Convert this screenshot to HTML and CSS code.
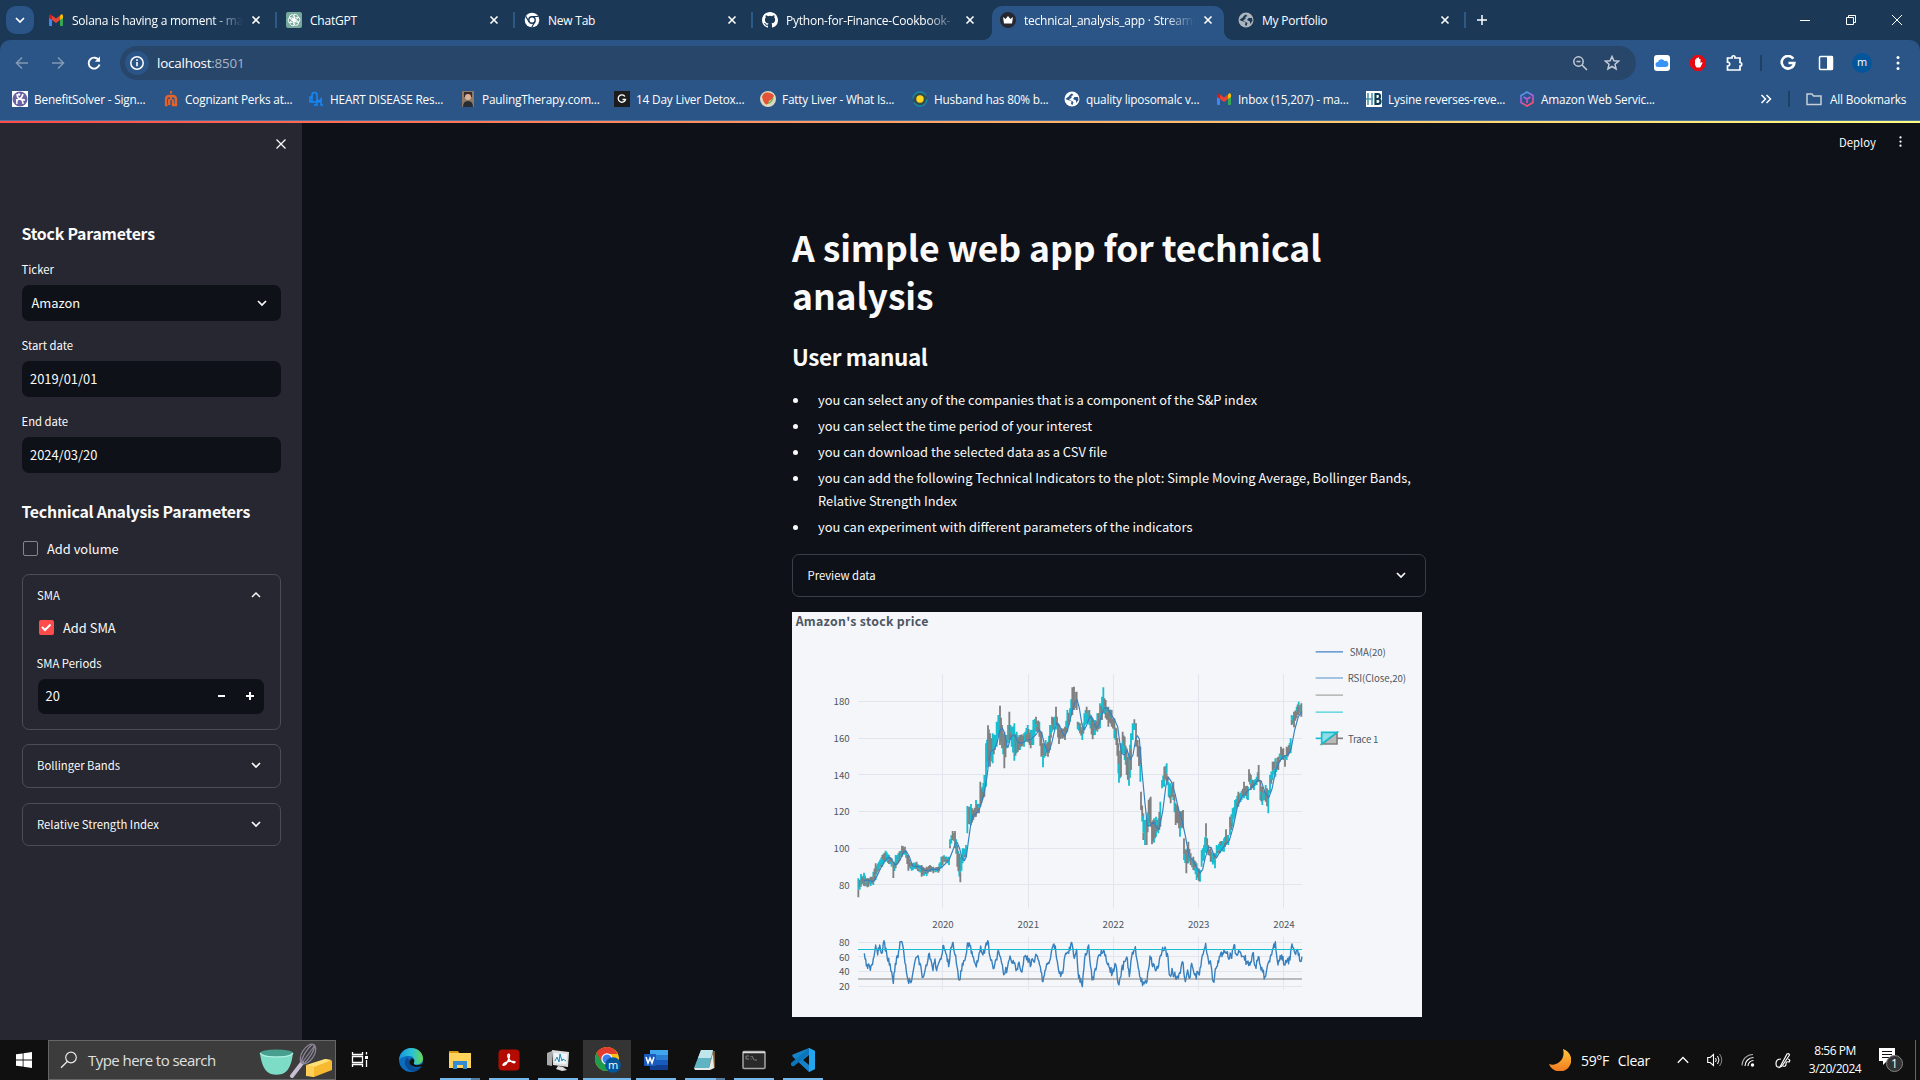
FILE: index.html
```html
<!DOCTYPE html>
<html lang="en">
<head>
<meta charset="utf-8">
<title>technical_analysis_app · Streamlit</title>
<link rel="stylesheet" href="styles.css">
</head>
<body>
<svg class="defs" width="0" height="0">
  <symbol id="x" viewBox="0 0 10 10"><path d="M1.500 1.500l7 7M8.500 1.500l-7 7" stroke="currentColor" stroke-width="1.600" fill="none"/></symbol>
  <symbol id="down" viewBox="0 0 12 12"><path d="M2 4l4 4 4-4" stroke="currentColor" stroke-width="1.700" fill="none"/></symbol>
  <symbol id="up" viewBox="0 0 12 12"><path d="M2 8l4-4 4 4" stroke="currentColor" stroke-width="1.500" fill="none"/></symbol>
  <symbol id="gmail" viewBox="0 0 16 16"><path d="M1 4v9q0 1 1 1h2V6z" fill="#4285f4"/><path d="M15 4v9q0 1-1 1h-2V6z" fill="#34a853"/><path d="M12 3.500l1-1q2-.7 2 1.500v2l-3 2z" fill="#fbbc04"/><path d="M4 3.500 8 6.500l4-3V8l-4 3-4-3z" fill="#ea4335"/><path d="M4 3.500 3 2.500Q1 2 1 4v2l3 2z" fill="#c5221f"/></symbol>
  <symbol id="globe" viewBox="0 0 16 16"><circle cx="8" cy="8" r="7.500" fill="currentColor"/><path d="M8 2.500C5 3.500 5.500 6 3.200 6.500L1.500 8l3 1.200 3 .8-.5 3 1.500 1 1-3L7 9.500 5 8.300 7.500 7V5l2-1z" fill="var(--cut)"/><path d="M14 6h-3.500L9 8l3 1.500V12l2.500-3z" fill="var(--cut)"/></symbol>
  <symbol id="dots" viewBox="0 0 4 16"><circle cx="2" cy="2.500" r="1.500"/><circle cx="2" cy="8" r="1.500"/><circle cx="2" cy="13.500" r="1.500"/></symbol>
</svg>

<div class="screen">
  <header class="browser">
    <div class="tabstrip">
      <div class="tabsearch"><svg width="12" height="12"><use href="#down"/></svg></div>
      <div class="tab first"><svg class="ic"><use href="#gmail"/></svg><span class="fade">Solana is having a moment - ma</span><svg class="close"><use href="#x"/></svg></div>
      <div class="tab"><svg class="ic" viewBox="0 0 16 16"><rect width="16" height="16" rx="2" fill="#75a99c"/><g fill="none" stroke="#fff" stroke-width=".9"><path id="petal" d="M8 2.500c3-1 5 2 3.500 4L7 9V5.500z"/><use href="#petal" transform="rotate(60 8 8)"/><use href="#petal" transform="rotate(120 8 8)"/><use href="#petal" transform="rotate(180 8 8)"/><use href="#petal" transform="rotate(240 8 8)"/><use href="#petal" transform="rotate(300 8 8)"/></g></svg><span>ChatGPT</span><svg class="close"><use href="#x"/></svg></div>
      <div class="tab"><svg class="ic" viewBox="0 0 16 16"><circle cx="8" cy="8" r="7.300" fill="#fff"/><circle cx="8" cy="8" r="3.200" fill="#fff" stroke="#1b3857" stroke-width="1.400"/><path d="M8 4.500h6.500M5 9.700 1.700 4.200M11 9.700l-3.300 5.500" stroke="#1b3857" stroke-width="1.200"/></svg><span>New Tab</span><svg class="close"><use href="#x"/></svg></div>
      <div class="tab last"><svg class="ic" viewBox="0 0 16 16"><path fill="#fff" d="M8 0C3.580 0 0 3.580 0 8c0 3.540 2.290 6.530 5.470 7.590.4.070.55-.17.55-.38v-1.490c-2.010.37-2.530-.49-2.690-.94-.09-.23-.48-.94-.82-1.130-.28-.15-.68-.52-.01-.53.63-.01 1.080.58 1.230.82.72 1.210 1.870.87 2.330.66.07-.52.28-.87.51-1.070-1.780-.2-3.640-.89-3.640-3.950 0-.87.310-1.590.82-2.150-.08-.2-.36-1.020.08-2.120 0 0 .67-.21 2.200.82a7.600 7.600 0 0 1 4 0c1.530-1.040 2.200-.82 2.200-.82.44 1.100.16 1.920.08 2.120.51.560.82 1.270.82 2.150 0 3.070-1.870 3.750-3.650 3.950.29.250.54.730.54 1.480v2.190c0 .21.150.46.550.38A8 8 0 0 0 16 8c0-4.420-3.580-8-8-8"/></svg><span class="fade">Python-for-Finance-Cookbook-</span><svg class="close"><use href="#x"/></svg></div>
      <div class="tab active"><svg class="ic" viewBox="0 0 16 16"><circle cx="8" cy="8" r="8" fill="#262730"/><path d="M3 5l2.500 2L8 4l2.500 3L13 5l-1 6.500H4z" fill="#fff"/></svg><span class="fade">technical_analysis_app · Streaml</span><svg class="close"><use href="#x"/></svg></div>
      <div class="tab end"><svg class="ic gray"><use href="#globe"/></svg><span>My Portfolio</span><svg class="close"><use href="#x"/></svg></div>
      <svg class="plus" width="12" height="12"><path d="M6 1v10M1 6h10" stroke="#fff" stroke-width="1.500"/></svg>
      <div class="wincontrols">
        <svg width="12" height="12"><path d="M1 6.500h10" stroke="#fff"/></svg>
        <svg width="12" height="12"><path d="M1.500 3.500h7v7h-7zM3.500 3.500v-2h7v7h-2" fill="none" stroke="#fff"/></svg>
        <svg width="12" height="12"><path d="M1 1l10 10M11 1 1 11" stroke="#fff"/></svg>
      </div>
    </div>

    <div class="toolbar">
      <div class="nav">
        <svg width="16" height="16"><path d="M14 8H3M8 2.500 2.500 8 8 13.500" fill="none" stroke="#8199b4" stroke-width="1.600"/></svg>
        <svg width="16" height="16"><path d="M2 8h11M8 2.500 13.500 8 8 13.500" fill="none" stroke="#8199b4" stroke-width="1.600"/></svg>
        <svg width="16" height="16"><path d="M13 5.500A5.500 5.500 0 1 0 13.500 9.500" fill="none" stroke="#fff" stroke-width="1.900"/><path d="M14 1.500v5.200H8.800z" fill="#fff"/></svg>
      </div>
      <div class="omnibox">
        <div class="info"><svg width="16" height="16"><circle cx="8" cy="8" r="6.200" fill="none" stroke="#fff" stroke-width="1.500"/><path d="M8 7v4.200M8 4.300v1.600" stroke="#fff" stroke-width="1.600"/></svg></div>
        <span class="url">localhost<span>:8501</span></span>
        <svg width="16" height="16"><g fill="none" stroke="#c3cbd5" stroke-width="1.500"><circle cx="6.500" cy="6.500" r="4.700"/><path d="M10 10l5 5M4.500 6.500h4"/></g></svg>
        <svg class="star" width="16" height="16"><path d="M8 1.500l1.900 4.300 4.700.4L11 9.300l1.100 4.700L8 11.500 3.900 14 5 9.300 1.400 6.200l4.700-.4z" fill="none" stroke="#c3cbd5" stroke-width="1.500"/></svg>
      </div>
      <div class="exts">
        <svg width="16" height="16"><rect width="16" height="16" rx="3" fill="#fff"/><path d="M4 12a2.500 2.500 0 0 1 0-5 3.500 3.500 0 0 1 6.500-1A3 3 0 0 1 12 12z" fill="#3a94f5"/></svg>
        <svg class="block" width="16" height="16"><path d="M5 0h6l5 5v6l-5 5H5l-5-5V5z" fill="#e50914"/><path d="M5 8V4.500h1.300V3h1.500v-.5h1.300V4h1.400v4l1.500-1 .5 1-2.300 4.500H6.500L5 10z" fill="#fff"/></svg>
        <svg class="puzzle" width="18" height="18"><path d="M2.500 4H7c-.5-3 3.500-3 3 0h5v4.500c2.300 0 2.300 3.500 0 3.500v4H2.500v-4c3 .2 3-4 0-3.800z" fill="none" stroke="#fff" stroke-width="1.700"/></svg>
        <i class="vr"></i>
        <svg class="google" width="16" height="16"><path d="M13.300 3.800A6.300 6.300 0 1 0 14.300 8H8.500" fill="none" stroke="#fff" stroke-width="2.600"/></svg>
        <svg class="panel" width="16" height="16"><rect x="1.500" y="1.500" width="13" height="13" rx="1" fill="none" stroke="#fff" stroke-width="1.500"/><path d="M9 1h6v14H9z" fill="#fff"/></svg>
        <b class="avatar">m</b>
        <svg class="white" width="4" height="16"><use href="#dots"/></svg>
      </div>
    </div>

    <div class="bookmarks">
      <a><svg class="ic" viewBox="0 0 16 16"><rect width="16" height="16" fill="#fff"/><circle cx="8" cy="8" r="7.500" fill="#6b62a6"/><path d="M5 3q0 4 3 5t3 5M11 3Q10 7 7 8t-2 5M8 8l-4 1M8 8l5 1" fill="none" stroke="#fff" stroke-width="1.500"/><circle cx="7" cy="3.500" r="1.300" fill="#fff"/></svg>BenefitSolver - Sign...</a>
      <a><svg class="ic" viewBox="0 0 16 16"><path d="M4.500 14H3V8.500Q3 5 6.500 5h3Q13 5 13 8.500V14h-3V8.500M6.200 8v6" fill="none" stroke="#e4632a" stroke-width="2.300"/><path d="M7 0h2v2.500H7zM7 5h2v4H7z" fill="#e4632a"/></svg>Cognizant Perks at...</a>
      <a><svg class="ic" viewBox="0 0 16 16"><path d="M4 11V4q0-2.500 2.500-2.500T9 4v7H2V6h2M6 14h3V8l2 3 2-3v6h2" fill="none" stroke="#1688f7" stroke-width="1.500"/></svg>HEART DISEASE Res...</a>
      <a><svg class="ic" viewBox="0 0 16 16"><rect x="2" width="12" height="16" fill="#8d7966"/><path d="M4 1h8v5H4z" fill="#3a2c27"/><circle cx="8" cy="6" r="3" fill="#dcb49c"/><path d="M3 16q0-6 5-6t5 6z" fill="#272b32"/></svg>PaulingTherapy.com...</a>
      <a><svg class="ic" viewBox="0 0 16 16"><rect width="16" height="16" fill="#1c1c1e"/><path d="M11 5.500A3.700 3.700 0 1 0 11.500 8.500H8.500" fill="none" stroke="#fff" stroke-width="1.300"/></svg>14 Day Liver Detox...</a>
      <a><svg class="ic" viewBox="0 0 16 16"><circle cx="8" cy="8" r="8" fill="#dedbbd"/><path d="M2 6q1-5 6-4.500T14 5q-1 3-5 5-1 4-3 3.500T2 6z" fill="#e45338"/><path d="M8 12q3 0 5-5" stroke="#73ad54" stroke-width="1.500" fill="none"/></svg>Fatty Liver - What Is...</a>
      <a><svg class="ic" viewBox="0 0 16 16"><circle cx="8" cy="8" r="7" fill="#344d48" stroke="#168baa" stroke-width="1.300" stroke-dasharray="18 4"/><circle cx="8" cy="8" r="3.700" fill="#ffd51e"/></svg>Husband has 80% b...</a>
      <a><svg class="ic light"><use href="#globe"/></svg>quality liposomalc v...</a>
      <a><svg class="ic"><use href="#gmail"/></svg>Inbox (15,207) - ma...</a>
      <a><svg class="ic" viewBox="0 0 16 16"><rect width="16" height="16" fill="#fff"/><path d="M2 2v12M6 2v12M0 8h7" stroke="#4b92ad" stroke-width="1.600"/><path d="M9.500 3h2.500q2 0 2 2.300T12 8H9.500h2.500q2.500 0 2.500 2.500T12 13H9.500z" fill="none" stroke="#103c53" stroke-width="2.200"/></svg>Lysine reverses-reve...</a>
      <a><svg class="ic" viewBox="0 0 16 16"><linearGradient id="aws" x2=".4" y2="1"><stop offset="0" stop-color="#18b7e8"/><stop offset=".5" stop-color="#b55bea"/><stop offset="1" stop-color="#ff4f70"/></linearGradient><path d="M8 1l6 3.500v7L8 15l-6-3.500v-7zM4.500 6 8 8l3.500-2M8 8v4" fill="none" stroke="url(#aws)" stroke-width="1.600"/></svg>Amazon Web Servic...</a>
      <svg class="more" width="12" height="10"><path d="M1.500 1l4 4-4 4M6.500 1l4 4-4 4" fill="none" stroke="#fff" stroke-width="1.500"/></svg>
      <i class="vr"></i>
      <a class="all"><svg class="ic" viewBox="0 0 16 16"><path d="M1 3h5l1.500 2H15v8.500H1z" fill="none" stroke="#c7ced8" stroke-width="1.500"/></svg>All Bookmarks</a>
    </div>
  </header>
  <div class="rainbow"></div>

  <div class="app">
    <aside class="sidebar">
      <div class="sidehead"><svg width="12" height="12"><path d="M1.500 1.500l9 9M10.500 1.500l-9 9" stroke="#fafafa" stroke-width="1.300"/></svg></div>
      <h2>Stock Parameters</h2>
      <label>Ticker</label>
      <div class="field select">Amazon<svg width="12" height="12"><use href="#down"/></svg></div>
      <label>Start date</label>
      <div class="field">2019/01/01</div>
      <label>End date</label>
      <div class="field">2024/03/20</div>
      <h2 class="second">Technical Analysis Parameters</h2>
      <div class="check"><i class="box"></i>Add volume</div>
      <section class="expander open">
        <div class="summary">SMA<svg width="12" height="12"><use href="#up"/></svg></div>
        <div class="check inner"><i class="box on"><svg width="14" height="14"><path d="M3 7l3 3 5.500-5.500" fill="none" stroke="#fff" stroke-width="2"/></svg></i>Add SMA</div>
        <label>SMA Periods</label>
        <div class="field number">20<svg width="42" height="12"><path d="M2 6h7M30 6h8M34 2v8" stroke="#fafafa" stroke-width="2"/></svg></div>
      </section>
      <section class="expander"><div class="summary">Bollinger Bands<svg width="12" height="12"><use href="#down"/></svg></div></section>
      <section class="expander third"><div class="summary">Relative Strength Index<svg width="12" height="12"><use href="#down"/></svg></div></section>
    </aside>

    <main class="main">
      <div class="apphead"><span>Deploy</span><svg class="white" width="3" height="13"><use href="#dots"/></svg></div>
      <div class="column">
        <h1>A simple web app for technical analysis</h1>
        <h3>User manual</h3>
        <ul>
          <li>you can select any of the companies that is a component of the S&amp;P index</li>
          <li>you can select the time period of your interest</li>
          <li>you can download the selected data as a CSV file</li>
          <li>you can add the following Technical Indicators to the plot: Simple Moving Average, Bollinger Bands, Relative Strength Index</li>
          <li>you can experiment with different parameters of the indicators</li>
        </ul>
        <div class="preview">Preview data<svg width="12" height="12"><use href="#down"/></svg></div>
        <svg class="chart" id="chart" viewBox="36 36 1890 1215" width="630" height="405">
          <text class="title" x="47" y="79" textLength="398">Amazon's stock price</text>
          <g class="grid"><path d="M235 304.500H1566M235 415.500H1566M235 523.500H1566M235 634.500H1566M235 745.500H1566M235 853.500H1566"/><path d="M235 1027.500H1566M235 1069.500H1566M235 1114.500H1566M235 1159.500H1566"/><path d="M487.500 222V926M745.500 222V926M1000.500 222V926M1255.500 222V926M1510.500 222V926M487.500 1010V1170M745.500 1010V1170M1000.500 1010V1170M1255.500 1010V1170M1510.500 1010V1170"/></g>
          <path id="up-bars" class="upbars"/><path id="down-bars" class="downbars"/>
          <path id="sma" class="sma"/>
          <path id="rsi" class="rsi"/>
          <path d="M234 1137H1566" stroke="#808080" stroke-opacity=".5" stroke-width="6"/>
          <path d="M234 1048.500H1566" stroke="#17becf" stroke-width="3"/>
          <g class="ylab"><text x="209" y="315">180</text><text x="209" y="426">160</text><text x="209" y="536">140</text><text x="209" y="645">120</text><text x="209" y="756">100</text><text x="209" y="867">80</text><text x="209" y="1038">80</text><text x="209" y="1082">60</text><text x="209" y="1126">40</text><text x="209" y="1170">20</text></g>
          <g class="xlab"><text x="489" y="984">2020</text><text x="745" y="984">2021</text><text x="1000" y="984">2022</text><text x="1256" y="984">2023</text><text x="1512" y="984">2024</text></g>
          <g class="legend"><path d="M1607 155.500h82" stroke="#6f9fd3"/><path d="M1607 234h82" stroke="#92b8df"/><path d="M1607 285.500h82" stroke="#bababa"/><path d="M1607 336.500h82" stroke="#72d8e1"/><path d="M1607 415h18" stroke="#17becf"/><path d="M1670 415h19" stroke="#808080"/><path class="fall" d="M1671 398v34h-45z"/><path class="rise" d="M1625 397h46l-46 35z"/><text x="1709" y="168" textLength="108">SMA(20)</text><text x="1703" y="245" textLength="175">RSI(Close,20)</text><text x="1704" y="428" textLength="91">Trace 1</text></g>
        </svg>
      </div>
    </main>
  </div>

  <footer class="taskbar">
    <div class="start"><svg width="16" height="16"><path d="M0 2.300 6.700 1.400v6.200H0zM7.500 1.300 16 0v7.600H7.500zM0 8.400h6.700v6.200L0 13.700zM7.500 8.400H16V16l-8.500-1.200z" fill="#fff"/></svg></div>
    <div class="search">
      <svg width="18" height="18"><circle cx="11" cy="6.500" r="5.300" fill="none" stroke="#e8e8e8" stroke-width="1.200"/><path d="M7.300 10.500 1 16.700" stroke="#e8e8e8" stroke-width="1.400"/></svg>
      <span>Type here to search</span>
      <svg width="76" height="36"><path d="M1 11q2 18 11 21 5 1.500 11 0 9-3 11-21z" fill="#7cdcc6"/><ellipse cx="17.500" cy="11" rx="16.500" ry="3.500" fill="#499f8f"/><path d="M1 11q2 4 16.500 4T34 11" fill="none" stroke="#b7f5e6" stroke-width="1.200"/><path d="M33 34l10-13" stroke="#c9bfd3" stroke-width="4" stroke-linecap="round"/><g fill="none" stroke="#8d8499" stroke-width="1.200"><ellipse cx="49" cy="12" rx="6" ry="11" transform="rotate(32 49 12)"/><ellipse cx="49" cy="12" rx="3" ry="11" transform="rotate(32 49 12)"/><path d="M43 21 56 3"/></g><path d="M47 24l20-7 6 2v9l-18 7-8-2z" fill="#f6b92f"/><path d="M47 23l19-6 7 1-18 7z" fill="#ffdf76"/><path d="M47 23l8 2v10l-8-1z" fill="#ffd057"/></svg>
    </div>
    <div class="task plain"><svg width="18" height="18"><path d="M1.500 1v2.500h10V1M1.500 5.500h10v6h-10zM1.500 16v-2.500h10V16M15.500 1v2.500M15.500 9v7" fill="none" stroke="#fff" stroke-width="1.300"/><path d="M14 5h3v3h-3z" fill="#fff"/></svg></div>
    <div class="task edge"><svg width="24" height="24"><defs><linearGradient id="e1" x1="0" x2="1"><stop offset="0" stop-color="#1696dd"/><stop offset=".55" stop-color="#2cc3d3"/><stop offset="1" stop-color="#68d94d"/></linearGradient></defs><circle cx="12" cy="12" r="12" fill="#0c6cbe"/><path d="M.2 12C.2 5 6 0 12 0c7 0 12 5 12 10.500 0 4-3.500 6-6.500 6-3.500 0-3-1-2.300-2.500 1-3-1.500-6-5-6C5 8 1 10 .2 12z" fill="url(#e1)"/><path d="M8 9.500C3 15 8 23 15 23.500c4-.8 6-2.500 7.500-5-7 3.500-13-.5-11.500-6z" fill="#0a4b91"/><path d="M12 10.500c2.500-.5 4 1.500 3 4-1.500 2.500 3.500 4 9 1l-1 2.500c-5 2.500-12.500.5-12.500-4z" fill="#111"/></svg></div>
    <div class="task on dual"><svg width="24" height="24"><path d="M1 3h9l2 3H1z" fill="#d99a13"/><path d="M1 5h22v15H1z" fill="#ffd35b"/><path d="M5 21v-8h14v8h-4v-4H9v4z" fill="#338bd1"/></svg></div>
    <div class="task on"><svg width="22" height="22"><rect x=".5" y=".5" width="21" height="21" rx="4" fill="#b30b00"/><path d="M5 16c1-3 8-5 12-3 0 2-5 0-7-5-.8-3 1.700-4 1.500-1C11 11 7 18 5 16z" fill="none" stroke="#fff" stroke-width="1.400"/></svg></div>
    <div class="task on"><svg width="24" height="24"><path d="M1 5l5-2v15l-5-1z" fill="#aaa"/><path d="M6 2l17 2-1 15-15-2z" fill="#dedede"/><path d="M8 5l13 1-1 10-11-1z" fill="#eef7fb"/><path d="M9 13l2-4 2 5 1-8 2 7 1-2 3 2" fill="none" stroke="#2287b5"/><path d="M12 18l5 1 4 3-5 1-6-2z" fill="#ddd"/></svg></div>
    <div class="task on focus"><svg width="28" height="26"><circle cx="14" cy="12" r="12" fill="#fbc116"/><path d="M3.600 6A12 12 0 0 0 14 24l5-9-5-3z" fill="#219b4c"/><path d="M3.600 6 9 15l5-8h10.500Q21 0 14 0T3.600 6" fill="#e33b2e"/><circle cx="14" cy="12" r="5.700" fill="#fff"/><circle cx="14" cy="12" r="4.500" fill="#3d7ded"/><circle cx="20" cy="18" r="7.800" fill="#04569c"/><text x="20" y="21.500" text-anchor="middle" font-size="11" fill="#fff">m</text></svg></div>
    <div class="task on"><svg width="24" height="22"><path d="M6 1h18v5H6z" fill="#41a5ee"/><path d="M6 6h18v5H6z" fill="#2b7cd3"/><path d="M6 11h18v5H6z" fill="#185abd"/><path d="M6 16h18v5H6z" fill="#103f91"/><rect y="5" width="12" height="12" rx="1" fill="#185abd"/><path d="M2 8l2 6 2-5 2 5 2-6" fill="none" stroke="#fff" stroke-width="1.500"/></svg></div>
    <div class="task on dual"><svg width="24" height="24"><path d="M18 3h4v17l-6 2z" fill="#76572f"/><path d="M8 2h12l-4 18H1z" fill="#5fb3c2"/><path d="M8 2h12l-2 8L5 10z" fill="#bfe6eb"/><path d="M1 20h15l4-15 1 15-4 2H2z" fill="#e5e9e7"/></svg></div>
    <div class="task on"><svg width="24" height="20"><rect x="1" y="1.500" width="22" height="17" rx="1" fill="#292929" stroke="#a5a5a5" stroke-width="1.500"/><path d="M1 2.500h22" stroke="#ddd" stroke-width="1.500"/><path d="M7 6H4v3h3M9 6v1M9 8.500v1M10 6l2 4M12.500 10H15" fill="none" stroke="#999" stroke-width=".8"/></svg></div>
    <div class="task on"><svg width="24" height="24"><path d="M18 0l6 3v18l-6 3L2 9q-2-2 1-3z" fill="#1682c8"/><path d="M18 0v6L3 18q-2 1-3-1v-2z" fill="#0b76bc"/><path d="M18 0l6 3v18l-6 3z" fill="#25a5ed"/><path d="M18 7v10l-6-5z" fill="#111"/></svg></div>
    <div class="tray">
      <svg class="moon" width="22" height="22"><linearGradient id="mg" x2="0" y2="1"><stop offset="0" stop-color="#ffc83c"/><stop offset="1" stop-color="#f17820"/></linearGradient><path d="M14 0a11.500 11.500 0 1 1-14 15C8 18 17 10 14 0z" fill="url(#mg)"/></svg>
      <span class="weather"><span>59°F</span><span>Clear</span></span>
      <svg class="t1" width="12" height="8"><path d="M.8 6.700 6 1.500l5.200 5.200" fill="none" stroke="#fff" stroke-width="1.300"/></svg>
      <svg class="t2" width="16" height="14"><path d="M.7 4.500h2.500L6.500 1.500v11L3.200 9.500H.7z" fill="none" stroke="#fff" stroke-width="1.100"/><path d="M8.500 5q1.500 2 0 4M10.500 3q3 4 0 8" fill="none" stroke="#fff"/><path d="M12.500 1q4.500 6 0 12" fill="none" stroke="#888"/></svg>
      <svg class="t3" width="14" height="14"><g fill="none" stroke="#fff" stroke-width="1.100"><path d="M1 12.500A11 11 0 0 1 12 1.500" stroke="#aaa"/><path d="M4 13a8.500 8.500 0 0 1 8.500-8.500M7 13a5.500 5.500 0 0 1 5.500-5.500"/></g><circle cx="11.500" cy="12" r="1.700" fill="#fff"/></svg>
      <svg class="t4" width="17" height="17"><path d="M5 15 12 2q2-1 2.500 1L7 14zM6 7Q1 7 1 11.500T5 15M8 14q3 1 3-2t3-2q2-2-1-3" fill="none" stroke="#fff" stroke-width="1.200"/></svg>
      <div class="clock"><span>8:56 PM</span><span>3/20/2024</span></div>
      <div class="notify"><svg width="24" height="26"><path d="M0 1h16v13H8l-4 4v-4H0z" fill="#fff"/><path d="M3 4.500h10M3 7.500h10M3 10.500h7" stroke="#111" stroke-width="1.200"/><circle cx="15.500" cy="16.500" r="8" fill="#333" stroke="#858585"/><text x="15.500" y="21" text-anchor="middle" font-size="12" fill="#fff">1</text></svg></div>
      <i class="peek"></i>
    </div>
  </footer>
</div>
<script src="chart.js"></script>
</body>
</html>
```
FILE: styles.css
```css
* { box-sizing: border-box; }
body { margin: 0; background: #0e1117; font-family: "Open Sans", "Noto Sans", sans-serif; }
.defs { position: absolute; }
svg { display: block; flex: none; }
.screen { width: 1920px; height: 1080px; display: flex; flex-direction: column; overflow: hidden; }
.ic { width: 16px; height: 16px; }
.white { fill: #fff; }
.vr { width: 2px; height: 16px; background: #1e4064; }

/* Browser chrome */
.browser { height: 121px; background: #1b3857; color: #fff; font-size: 12px; letter-spacing: -.23px; flex: none; }
.tabstrip { height: 40px; display: flex; align-items: center; padding-left: 6px; }
.tabsearch { width: 28px; height: 28px; border-radius: 10px; background: #2a5586; display: flex; align-items: center; justify-content: center; }
.tab { width: 238px; height: 40px; display: flex; align-items: center; gap: 8px; padding: 0 15px 0 10px; position: relative; white-space: nowrap; }
.tab::after { content: ""; position: absolute; right: -1px; top: 12px; width: 2px; height: 16px; background: #2d5987; }
.tab.first { width: 242px; padding-left: 14px; }
.tab span { flex: 1; }
.tab .fade { mask-image: linear-gradient(90deg, #000 82%, transparent 100%); }
.tab .close { width: 10px; height: 10px; }
.tab.last { width: 240px; padding-right: 17px; }
.tab.last::after, .tab.active::after { display: none; }
.tab.active { width: 232px; height: 34px; align-self: flex-end; padding: 0 11px 6px 8px; background: #2a5586; border-radius: 10px 10px 0 0; }
.tab.active::before { content: ""; position: absolute; left: -10px; right: -10px; bottom: 0; height: 10px; background: radial-gradient(circle at 0 0, transparent 10px, #2a5586 10.5px) left / 10px 10px no-repeat, radial-gradient(circle at 100% 0, transparent 10px, #2a5586 10.5px) right / 10px 10px no-repeat; }
.tab.end { width: 241px; padding-left: 14px; }
.gray { color: #aeb4bb; --cut: #1b3857; }
.light { color: #fff; --cut: #2a5586; }
.plus { margin-left: 11px; }
.wincontrols { margin-left: auto; display: flex; gap: 34px; padding-right: 17px; }
.toolbar { height: 46px; background: #2a5586; border-radius: 10px 10px 0 0; display: flex; align-items: center; }
.nav { display: flex; gap: 20px; padding-left: 14px; width: 120px; }
.omnibox { width: 1516px; height: 34px; border-radius: 17px; background: #28466a; display: flex; align-items: center; padding: 0 16px 0 5px; }
.info { width: 24px; height: 24px; border-radius: 50%; background: #2a5586; display: flex; align-items: center; justify-content: center; }
.url { flex: 1; padding-left: 8px; font-size: 13.400px; letter-spacing: -.2px; }
.url span { color: #a7b4c4; }
.star { margin-left: 16px; }
.exts { display: flex; align-items: center; margin-left: 18px; }
.block { margin-left: 20px; }
.puzzle { margin: 0 17px 0 19px; }
.google { margin: 0 22px 0 18px; }
.avatar { width: 20px; height: 20px; margin: 0 24px 0 18px; border-radius: 50%; background: #04569c; font-weight: 400; font-size: 11px; line-height: 18px; text-align: center; }
.bookmarks { height: 35px; background: #2a5586; border-bottom: 1px solid #4b759e; display: grid; align-items: center; padding: 0 0 8px 12px; grid-template-columns: 151px 145px 152px 154px 146px 152px 152px 152px 150px 153px 241px 28px 18px 1fr; }
.bookmarks a { display: flex; align-items: center; gap: 6px; white-space: nowrap; font-size: 11.800px; letter-spacing: -.18px; }
.bookmarks .all { gap: 8px; }
.rainbow { height: 2px; background: linear-gradient(90deg, #ff4b4b, #ffa868, #fffd80); flex: none; }

/* Application */
.app { height: 917px; display: flex; flex: none; background: #0e1117; color: #fafafa; font-family: "Noto Sans CJK SC", "Noto Sans", sans-serif; font-size: 12.900px; }
.sidebar { width: 302px; background: #262730; padding: 0 21px 0 22px; }
.sidehead { height: 96px; display: flex; justify-content: flex-end; padding-top: 15px; margin-right: -6px; }
h1, h2, h3 { margin: 0; font-weight: 700; }
.sidebar h2 { font-size: 15.900px; line-height: 30px; letter-spacing: -.24px; margin-left: -.5px; }
.sidebar label { display: block; font-size: 11.300px; height: 40px; line-height: 20px; padding-top: 14px; margin-left: -.5px; }
.sidebar h2 + label { height: 36px; padding-top: 10px; }
.field { height: 36px; border-radius: 7px; background: #0e1117; line-height: 36px; padding-left: 8px; }
.select { display: flex; justify-content: space-between; align-items: center; padding: 0 13px 0 9.500px; }
.sidebar .second { margin-top: 24px; }
.check { display: flex; align-items: center; gap: 9px; padding-left: 1px; height: 47px; padding-bottom: 4px; }
.box { width: 15px; height: 15px; border: 1px solid #85868b; border-radius: 2px; }
.box.on { background: #ff4b4b; border: 0; }
.expander { border: 1px solid #4b4c54; border-radius: 7px; height: 44px; margin-bottom: 15px; padding: 0 14px; font-size: 11.300px; }
.expander.open { height: 156px; margin-bottom: 14px; }
.expander.third { height: 43px; }
.summary { height: 41px; display: flex; align-items: center; justify-content: space-between; padding: 0 4px 2px 0; }
.inner { height: 26px; font-size: 12.900px; gap: 9.500px; margin-top: -2px; padding: 0 0 0 1.500px; }
.expander label { height: 39px; padding-top: 13px; }
.number { width: 226px; height: 35px; margin-left: 1px; font-size: 12.900px; display: flex; align-items: center; justify-content: space-between; padding: 0 6px 1px 7.500px; }
.main { flex: 1; }
.apphead { height: 38px; display: flex; justify-content: flex-end; align-items: center; gap: 23px; padding: 0 18px 1px 0; font-size: 11.300px; }
.column { width: 634px; margin: 62px 0 0 490px; }
h1 { font-size: 35.500px; line-height: 47.500px; letter-spacing: -.08px; }
h3 { font-size: 22.500px; line-height: 32px; margin-top: 22px; letter-spacing: -.4px; }
ul { margin: 16px 0 0; padding: 0 0 0 26px; list-style: none; }
li { line-height: 23px; margin-bottom: 3px; position: relative; margin-right: -10px; }
li::before { content: ""; position: absolute; left: -25px; top: 10px; width: 5px; height: 5px; border-radius: 50%; background: #fafafa; }
.preview { height: 43px; border: 1px solid #3b3e46; border-radius: 7px; margin: 16px 0 15px; padding: 0 18px 2px 14.500px; display: flex; align-items: center; justify-content: space-between; font-size: 11.300px; }

/* Chart, three units to a pixel */
.chart { background: #f5f6f9; }
.chart text { font-size: 29px; fill: #4d5663; }
.chart .title { font-weight: 700; font-size: 37px; }
.grid path { stroke: #e1e5ed; stroke-width: 3; }
.ylab { text-anchor: end; }
.xlab { text-anchor: middle; }
.upbars, .downbars { fill: none; stroke-width: 5.500; stroke: #17becf; }
.downbars { stroke: #808080; }
.sma, .rsi { fill: none; stroke: #3780bf; stroke-width: 3.500; stroke-linejoin: round; }
.rsi { stroke-width: 4.200; }
.legend path { stroke-width: 5; fill: none; }
.legend .rise { fill: #8fdde5; stroke: #17becf; }
.legend .fall { fill: #b9b9ba; stroke: #808080; }

/* Windows taskbar */
.taskbar { height: 40px; flex: none; display: flex; background: #101010; color: #fff; }
.start { width: 48px; display: flex; align-items: center; justify-content: center; }
.search { width: 288px; height: 40px; background: #3c3c3c; border: 1px solid #666; display: flex; align-items: center; padding-left: 11px; font-size: 15px; letter-spacing: -.55px; color: #e0e0e0; }
.search span { width: 181px; padding-left: 10px; white-space: nowrap; }
.task { width: 48px; margin-right: 1px; display: flex; align-items: center; justify-content: center; position: relative; }
.task.plain { margin-right: 3px; }
.task.on::after { content: ""; position: absolute; left: 4px; right: 4px; bottom: 0; height: 2px; background: #76b9ed; }
.task.dual::after { background: linear-gradient(90deg, #76b9ed 78%, #557da0 78%); }
.task.focus { background: #343434; }
.task.focus::after { left: 0; right: 0; }
.tray { margin-left: auto; width: 371px; display: flex; align-items: center; }
.weather { width: 101px; padding-left: 10px; font-size: 14px; letter-spacing: -.35px; white-space: nowrap; display: flex; gap: 9px; }
.t1 { margin-left: 5px; }
.t2 { margin-left: 18px; }
.t3 { margin-left: 18px; }
.t4 { margin-left: 20px; }
.clock { width: 72px; margin-left: 7px; text-align: center; font-size: 12px; line-height: 18px; letter-spacing: -.5px; display: flex; flex-direction: column; }
.notify { margin-left: 8px; }
.peek { width: 1px; height: 40px; background: #666; margin-left: 12px; }
```
FILE: chart.js
```js
// Price range per period: x, top, bottom
const range = `235 835 892,243 822 860,252 818 858,262 835 862,272 830 858,280 815 855,287 790 840,297 785 810,307 765 800,317 752 785,327 765 792,335 775 800,340 785 834,347 765 805,355 760 790,366 737 770,375 740 762,385 765 812,395 788 812,410 785 808,425 795 830,440 800 828,450 795 815,460 800 820,475 800 818,484 770 805,492 766 785,507 770 795,510 718 745,518 693 720,525 693 745,532 735 800,541 770 847,548 745 790,558 735 770,562 618 700,567 620 672,573 612 676,580 630 660,588 600 650,597 612 640,601 545 620,607 560 600,613 525 590,618 430 560,624 376 485,630 400 500,638 400 490,645 405 450,650 365 440,655 345 410,660 317 435,666 375 445,673 395 505,680 405 445,688 335 420,695 380 440,703 370 482,710 395 460,720 405 450,732 400 440,743 375 425,752 390 445,760 360 435,768 350 395,778 365 410,784 395 470,789 430 502,797 420 468,804 425 470,810 375 450,816 350 395,823 350 390,828 320 375,837 375 432,845 385 415,855 380 420,862 330 395,870 325 365,877 262 345,882 260 330,890 275 330,893 365 388,900 370 400,907 385 420,913 340 390,920 320 370,928 330 375,938 355 418,945 360 405,952 340 395,960 310 385,966 290 360,970 262 340,977 300 355,985 320 380,995 330 380,1003 355 415,1009 385 435,1015 430 520,1017 465 548,1023 430 530,1028 395 460,1034 410 480,1040 445 525,1047 460 557,1053 400 510,1058 370 420,1063 358 390,1068 370 440,1073 420 470,1081 440 545,1083 575 630,1090 640 720,1095 660 735,1100 655 735,1106 600 680,1112 590 680,1116 665 733,1122 655 728,1128 650 710,1135 655 700,1141 605 680,1146 540 565,1153 500 560,1160 490 545,1166 545 590,1172 550 610,1180 545 600,1187 610 675,1194 620 670,1200 635 710,1209 630 685,1212 715 780,1219 750 820,1225 725 790,1232 760 795,1240 770 810,1250 790 840,1260 810 845,1265 750 800,1272 735 780,1278 670 760,1285 735 765,1292 745 785,1305 760 805,1310 735 770,1320 725 760,1332 715 755,1338 688 735,1345 705 735,1350 650 705,1358 625 680,1365 600 650,1375 575 620,1385 572 600,1392 545 595,1404 560 600,1407 508 545,1413 525 570,1422 540 570,1430 530 555,1436 495 545,1441 540 600,1447 560 615,1457 555 605,1465 570 640,1470 525 580,1478 485 540,1486 475 530,1495 470 510,1503 440 480,1510 445 480,1515 465 500,1520 440 480,1532 415 460,1535 345 375,1542 335 382,1550 320 355,1556 305 345,1564 310 350`.split(',').map(r => r.split(' ').map(Number));

const average = '252,842 262,840 280,845 290,830 302,805 315,782 325,772 335,778 343,793 350,794 360,780 370,758 378,752 388,770 398,798 410,800 420,799 432,811 442,812 455,808 475,808 485,802 495,792 508,778 518,752 526,730 532,728 539,746 547,777 553,782 559,770 565,725 572,675 578,648 590,640 598,628 606,605 614,572 621,530 627,480 633,455 643,447 652,425 660,390 667,384 674,400 680,436 684,442 691,416 699,405 707,410 714,428 724,430 740,422 755,416 767,405 777,390 785,398 793,432 801,453 808,452 815,430 823,395 830,369 838,375 847,398 853,409 860,397 868,370 877,330 885,307 891,299 898,324 906,375 912,390 919,378 927,355 934,348 942,367 949,384 957,374 964,348 972,325 980,322 991,340 1003,358 1013,380 1019,425 1025,460 1033,465 1041,450 1051,478 1059,465 1067,417 1072,407 1078,417 1086,515 1095,610 1102,678 1110,675 1121,667 1129,682 1137,688 1148,635 1158,555 1165,532 1174,545 1185,580 1195,625 1207,665 1217,712 1227,770 1237,778 1250,802 1260,820 1268,808 1276,772 1286,742 1293,742 1300,760 1309,774 1320,756 1335,735 1348,721 1360,680 1372,622 1383,595 1396,580 1410,567 1424,552 1435,540 1444,544 1454,575 1466,593 1476,567 1488,507 1500,482 1513,468 1524,465 1533,448 1544,390 1555,350 1566,335';

const strength = '253,1060 263,1105 273,1098 282,1070 287,1035 293,1065 299,1035 305,1060 312,1022 320,1060 328,1095 335,1115 340,1150 346,1090 354,1073 360,1025 368,1035 373,1072 379,1115 386,1150 397,1128 404,1088 412,1070 420,1090 429,1132 438,1095 448,1060 459,1112 465,1077 470,1112 483,1078 491,1037 500,1065 506,1100 511,1055 519,1027 525,1065 531,1100 538,1140 547,1090 555,1080 562,1030 572,1038 578,1070 587,1095 595,1078 602,1038 609,1065 616,1040 623,1022 630,1070 642,1105 655,1050 665,1090 673,1122 682,1105 690,1068 702,1090 708,1112 715,1090 724,1115 734,1070 742,1068 751,1100 759,1080 772,1068 781,1100 789,1145 797,1110 807,1090 816,1045 826,1038 832,1085 838,1120 848,1120 857,1060 866,1060 875,1027 883,1075 890,1048 896,1135 902,1135 907,1160 914,1075 926,1035 936,1140 948,1110 957,1065 966,1060 977,1065 987,1100 997,1120 1005,1090 1017,1155 1025,1105 1042,1075 1048,1130 1055,1070 1066,1040 1075,1105 1083,1145 1092,1152 1101,1145 1110,1068 1118,1100 1129,1110 1138,1080 1148,1042 1162,1060 1168,1125 1178,1115 1189,1138 1199,1118 1207,1085 1216,1145 1223,1110 1229,1135 1235,1090 1244,1125 1258,1125 1267,1065 1277,1030 1285,1080 1293,1095 1300,1145 1310,1100 1320,1070 1330,1062 1340,1060 1355,1075 1362,1035 1370,1065 1380,1055 1392,1070 1400,1085 1410,1095 1418,1060 1428,1105 1435,1070 1443,1110 1455,1130 1465,1088 1475,1065 1486,1025 1494,1095 1505,1065 1515,1095 1530,1080 1536,1032 1545,1060 1553,1050 1561,1085 1566,1070'.split(' ').map(p => p.split(',').map(Number));

// Deterministic pseudo-random value in 0..1
const noise = n => { const v = Math.sin(n * 12.9898) * 43758.5453; return v - Math.floor(v); };

let up = '', down = '';
for (let i = 0; i < range.length; i++) {
  const [x, top, bottom] = range[i];
  const next = range[i + 1] || [x + 1, top, bottom];
  const steps = Math.max(1, Math.round((next[0] - x) / 3.4));
  const jump = next[0] - x < 4;
  for (let k = 0; k < steps; k++) {
    const t = jump ? 0 : k / steps;
    const hi = top + (next[1] - top) * t, lo = bottom + (next[2] - bottom) * t;
    const h = lo - hi, seed = i * 9 + k;
    const a = k ? hi + h * noise(seed) * 0.25 : hi, b = k ? lo - h * noise(seed + 500) * 0.25 : lo;
    const px = x + (next[0] - x) * k / steps;
    const rising = noise(seed + 90) + (top - next[1]) * 0.008 > 0.5;
    const split = a + (b - a) * (0.35 + 0.4 * noise(seed + 40));
    const one = `M${px.toFixed(1)} ${a.toFixed(1)}V${split.toFixed(1)}`;
    const two = `M${px.toFixed(1)} ${split.toFixed(1)}V${b.toFixed(1)}`;
    const mixed = noise(seed + 7) <= 0.35;
    if (rising) up += one; else down += one;
    if (rising !== mixed) up += two; else down += two;
  }
}
document.getElementById('up-bars').setAttribute('d', up);
document.getElementById('down-bars').setAttribute('d', down);
document.getElementById('sma').setAttribute('d', 'M' + average);

let line = 'M' + strength[0];
for (let i = 1; i < strength.length; i++) {
  const [x0, y0] = strength[i - 1], [x1, y1] = strength[i];
  const n = Math.max(2, Math.round((x1 - x0) / 2.2));
  for (let k = 1; k < n; k++) {
    line += `L${(x0 + (x1 - x0) * k / n).toFixed(1)} ${(y0 + (y1 - y0) * k / n + (noise(i * 13 + k) - 0.5) * 24).toFixed(1)}`;
  }
  line += 'L' + x1 + ' ' + y1;
}
document.getElementById('rsi').setAttribute('d', line);
```
